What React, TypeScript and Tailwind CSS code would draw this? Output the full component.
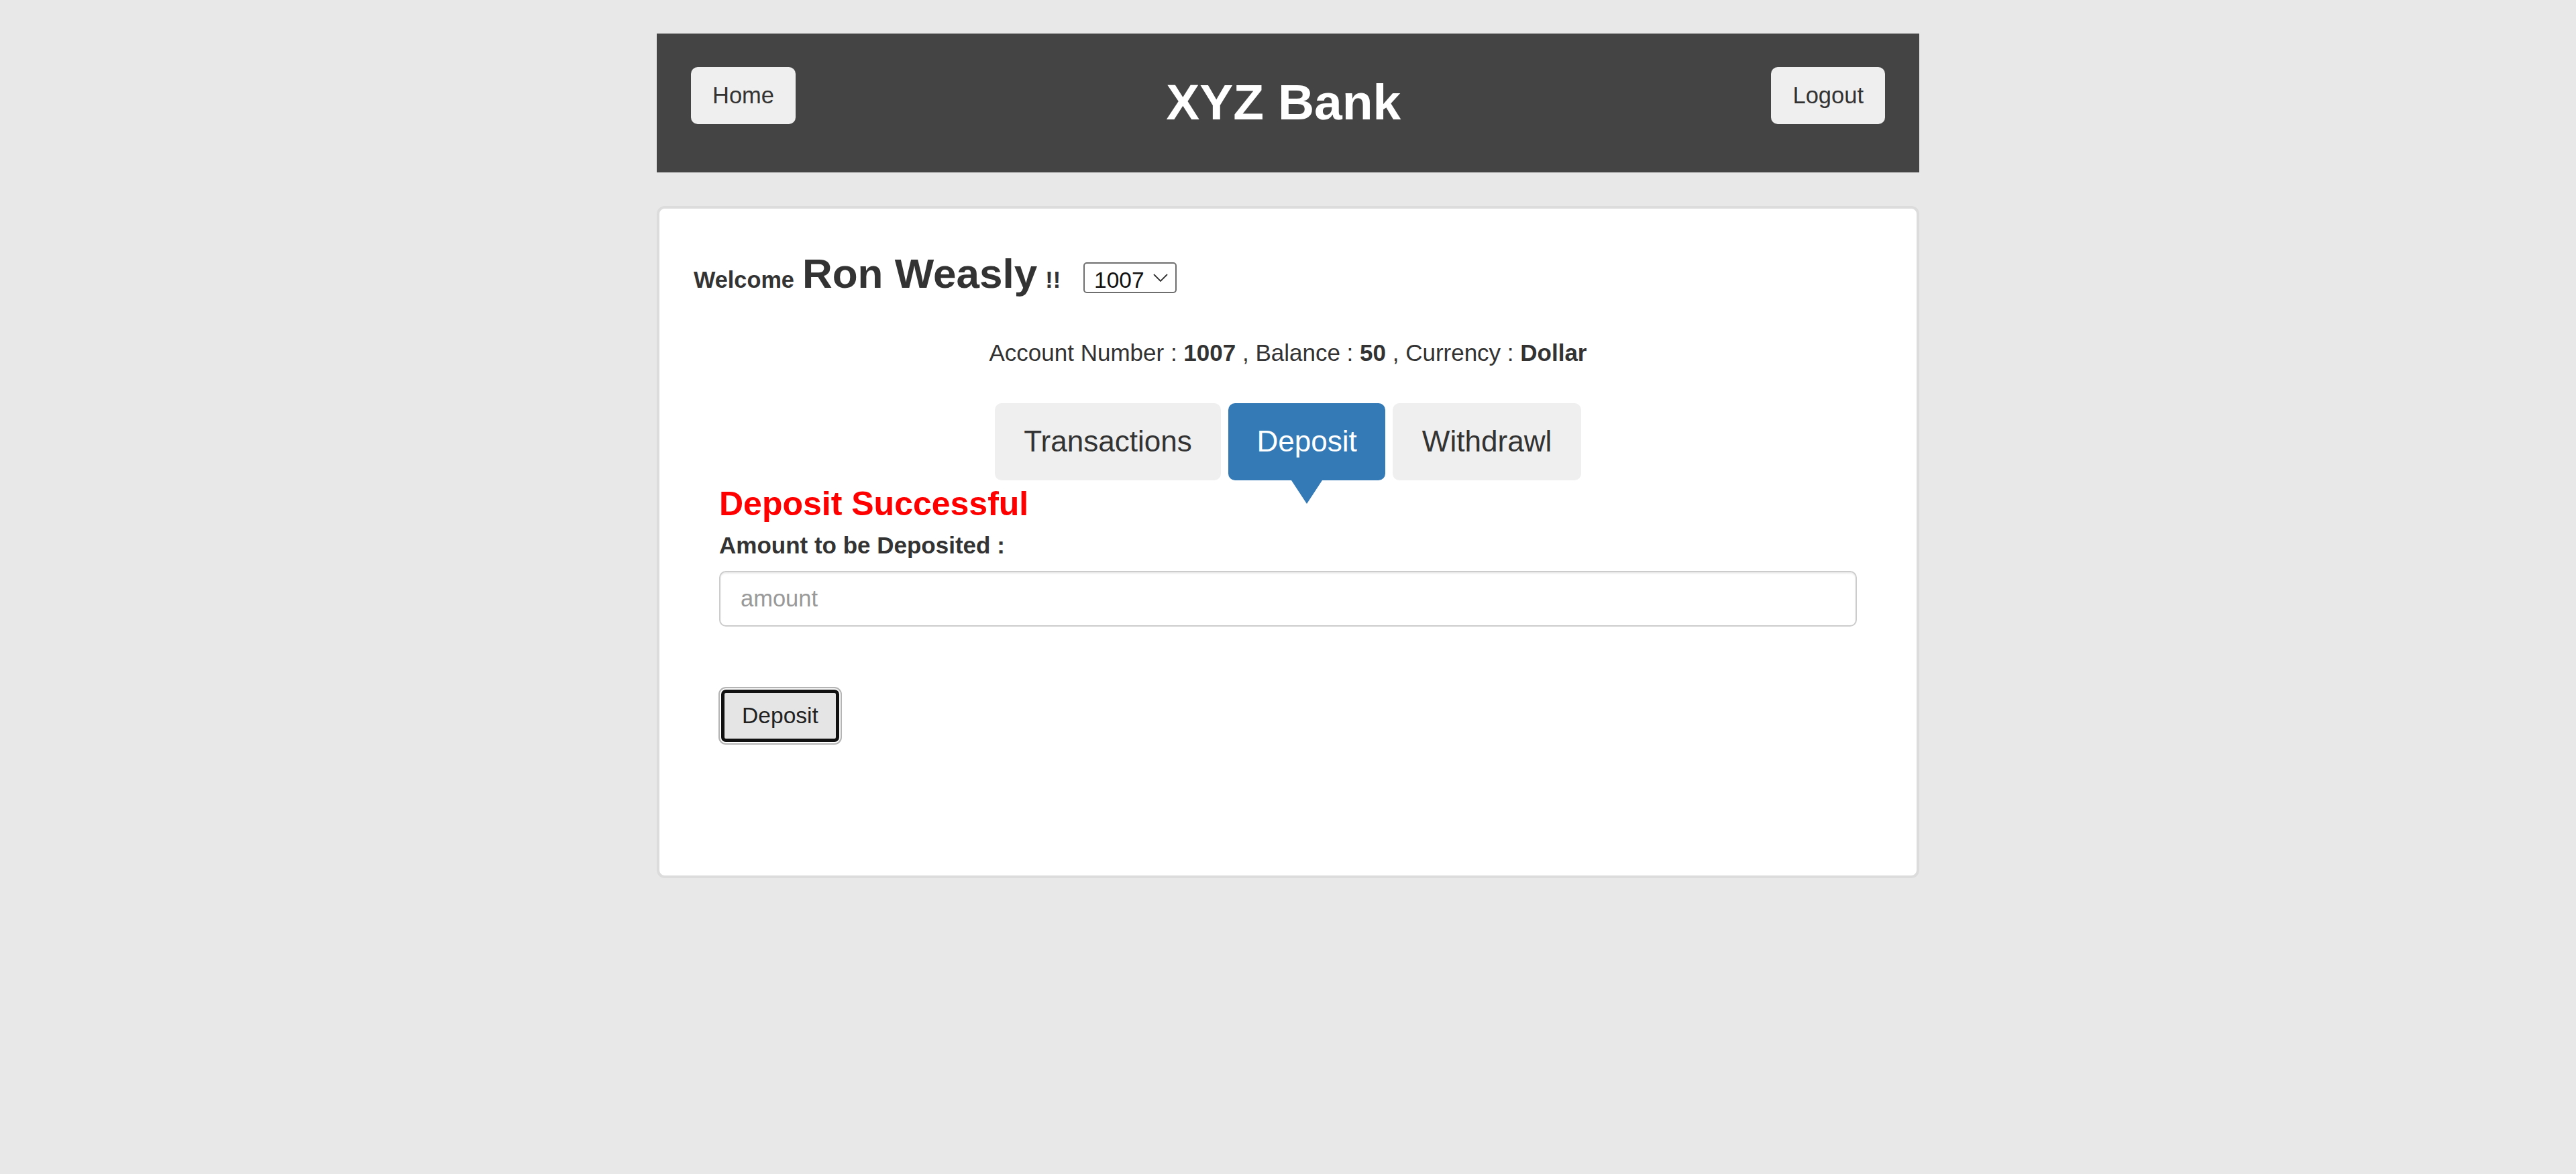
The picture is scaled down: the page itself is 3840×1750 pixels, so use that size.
import React from "react";

export default function App() {
  return (
    <div className="min-h-[1750px] w-full bg-[#e8e8e8] font-['Liberation_Sans',Arial,sans-serif] text-[#333333]">
      <div className="mx-auto w-[1882px] pt-[50px]">
        {/* Header */}
        <header className="flex h-[207px] items-start justify-between bg-[#444444] px-[51px] pt-[50px]">
          <button className="flex h-[85px] items-center rounded-[10px] bg-[#efefef] px-[32px] text-[34.5px] leading-none text-[#333333]">
            Home
          </button>
          <h1 className="mt-[15px] text-[75px] font-bold leading-[75px] text-white">XYZ Bank</h1>
          <button className="flex h-[85px] items-center rounded-[10px] bg-[#efefef] px-[32px] text-[34.5px] leading-none text-[#333333]">
            Logout
          </button>
        </header>

        {/* Card */}
        <div className="mt-[50px] rounded-[12px] border-[4px] border-[#dcdcdc] bg-white px-[51px] pt-[66px] pb-[199px]">
          {/* Welcome row */}
          <div className="flex items-baseline leading-none">
            <strong className="text-[34.3px] font-bold">Welcome</strong>
            <span className="ml-[12px] text-[62px] font-bold">Ron Weasly</span>
            <strong className="ml-[12px] text-[34.3px] font-bold">!!</strong>
            <div className="ml-[34px] inline-flex h-[46px] items-baseline rounded-[5px] border-[2px] border-[#6e6e6e] pl-[14px] pr-[11px] pt-[8px]">
              <span className="text-[33.5px] leading-none text-[#111111]">1007</span>
              <svg className="ml-[13px] self-center mb-[8px]" width="22" height="12" viewBox="0 0 22 12" fill="none">
                <polyline points="1,1 11,11 21,1" stroke="#333333" strokeWidth="1.8" />
              </svg>
            </div>
          </div>

          {/* Account line */}
          <div className="mt-[67px] text-center text-[35px] leading-[40px]">
            Account Number : <strong>1007</strong> , Balance : <strong>50</strong> , Currency : <strong>Dollar</strong>
          </div>

          {/* Tabs */}
          <div className="mt-[55px] flex justify-center gap-[11px]">
            <button className="flex h-[115px] items-center rounded-[10px] bg-[#efefef] px-[43.5px] text-[44.08px] leading-none text-[#333333]">
              Transactions
            </button>
            <button className="relative flex h-[115px] items-center rounded-[10px] bg-[#337ab7] px-[42px] text-[44.08px] leading-none text-white">
              Deposit
              <span className="absolute left-1/2 top-full -translate-x-1/2 border-l-[23px] border-r-[23px] border-t-[35px] border-l-transparent border-r-transparent border-t-[#337ab7]" />
            </button>
            <button className="flex h-[115px] items-center rounded-[10px] bg-[#efefef] px-[44px] text-[44.08px] leading-none text-[#333333]">
              Withdrawl
            </button>
          </div>

          {/* Form */}
          <div className="px-[38px]">
            <div className="mt-[8px] text-[50px] font-bold leading-[54px] text-[#ff0000]">Deposit Successful</div>
            <label className="mt-[15px] block text-[35px] font-bold leading-[40px]">Amount to be Deposited :</label>
            <input
              type="number"
              placeholder="amount"
              className="mt-[18px] block h-[83px] w-full rounded-[10px] border-[2px] border-[#cccccc] bg-white px-[30px] text-[34.5px] text-[#555555] shadow-[inset_0_2px_2px_rgba(0,0,0,0.075)] outline-none placeholder:text-[#999999]"
            />
            <button className="mt-[94px] ml-[3px] block h-[78px] w-[176px] rounded-[7px] border-[5px] border-[#111111] bg-[#e5e5e5] text-[33.6px] leading-none text-[#222222] outline outline-[2px] outline-offset-[2px] outline-[#b4b4b4]">
              Deposit
            </button>
          </div>
        </div>
      </div>
    </div>
  );
}
